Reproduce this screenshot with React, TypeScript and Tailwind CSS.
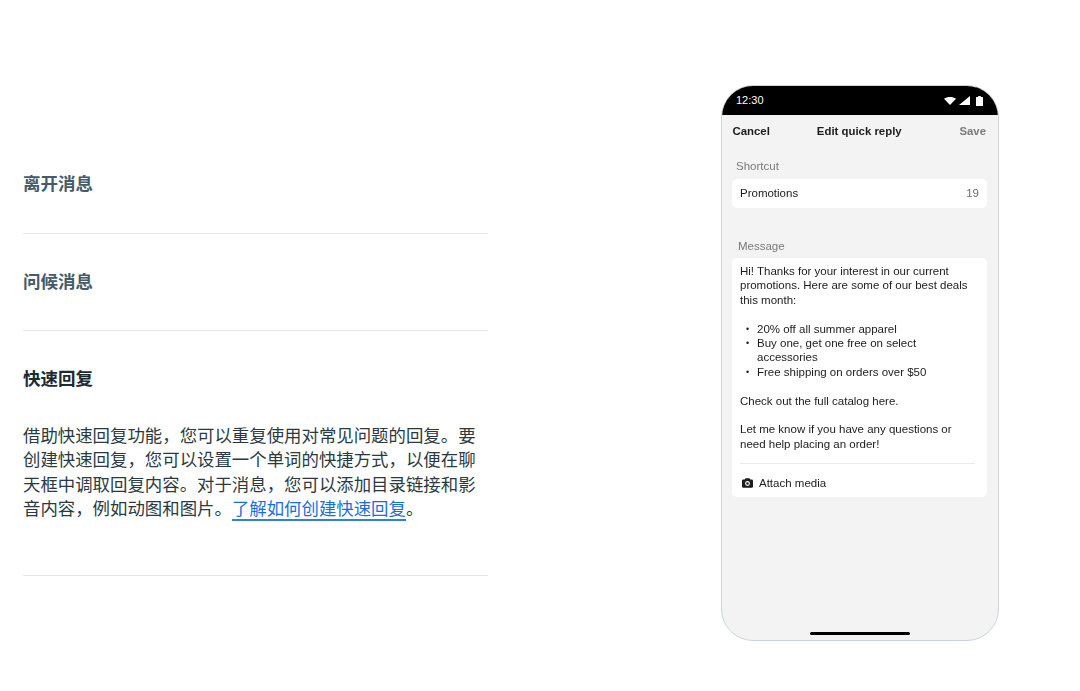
import React from "react";

const cjk = { fontFamily: '"Liberation Sans", "Noto Sans CJK SC", sans-serif' };

function Row({ title }: { title: string }) {
  return (
    <div className="border-b border-[#e4e6eb] h-[97.5px] flex items-center">
      <h3 className="text-[17.5px] leading-[24.5px] font-bold text-[#465a69]">{title}</h3>
    </div>
  );
}

function Bullet({ children }: { children: React.ReactNode }) {
  return (
    <li className="flex">
      <span className="w-[17px] pl-[6px] shrink-0 text-[9px]">•</span>
      <span>{children}</span>
    </li>
  );
}

export default function App() {
  return (
    <div className="w-[1080px] h-[691px] bg-white overflow-hidden flex items-start" style={cjk}>
      <div className="w-[465px] ml-[23px] mt-[136px] shrink-0">
        <Row title="离开消息" />
        <Row title="问候消息" />
        <div className="border-b border-[#e4e6eb] pt-[36px] pb-[53px]">
          <h3 className="text-[17.5px] leading-[24.5px] font-bold text-[#1c2b33]">快速回复</h3>
          <p className="mt-[32px] text-[17.42px] leading-[24.5px] text-[#2b3a42]">
            借助快速回复功能，您可以重复使用对常见问题的回复。要创建快速回复，您可以设置一个单词的快捷方式，以便在聊天框中调取回复内容。对于消息，您可以添加目录链接和影音内容，例如动图和图片。
            <a className="text-[#1a6fe0] border-b-2 border-[#2f7fe6]">了解如何创建快速回复</a>。
          </p>
        </div>
      </div>

      <div
        className="ml-[233px] mt-[85px] w-[278px] h-[556px] shrink-0 rounded-[32px] border-[1.5px] border-[#c8d5df] bg-[#f3f3f3] overflow-hidden flex flex-col text-[#1c1c1c] blur-[0.4px]"
        style={{ fontFamily: '"Liberation Sans", Arial, sans-serif' }}
      >
        <div className="h-[29px] bg-black text-white flex items-center justify-between pl-[14px] pr-[15px] shrink-0">
          <span className="text-[11px]">12:30</span>
          <div className="flex items-center gap-[3px]">
            <svg width="12" height="8" viewBox="0 0 12 8"><path d="M0 1.800C3.300 -.6 8.700 -.6 12 1.800L6 8z" fill="#fff" /></svg>
            <svg width="11" height="9" viewBox="0 0 11 9"><path d="M11 0V9H0z" fill="#fff" /></svg>
            <svg width="7" height="10" viewBox="0 0 7 10" className="ml-[3px]"><path d="M2.200 0h2.600v1H6.500a.5.5 0 0 1 .5.5V9.500a.5.5 0 0 1-.5.5H.5a.5.5 0 0 1-.5-.5V1.500a.5.5 0 0 1 .5-.5H2.200z" fill="#fff" /></svg>
          </div>
        </div>
        <div className="grid grid-cols-[1fr_auto_1fr] items-center pl-[10.5px] pr-[12px] mt-[8px] h-[16px] text-[11.4px] font-bold">
          <span>Cancel</span>
          <span>Edit quick reply</span>
          <span className="text-[#7a7a7a] text-right">Save</span>
        </div>
        <div className="text-[11.5px] leading-[14px] text-[#7a7a7a] mt-[20px] ml-[14px]">Shortcut</div>
        <div className="mx-[10px] w-[255px] mt-[6px] h-[29px] rounded-[5px] bg-white flex items-center justify-between px-[8px] text-[11.5px]">
          <span>Promotions</span>
          <span className="text-[#6b6b6b]">19</span>
        </div>
        <div className="text-[11.5px] leading-[14px] text-[#7a7a7a] mt-[31px] ml-[16px]">Message</div>
        <div className="mx-[10px] w-[255px] mt-[5px] h-[239px] rounded-[5px] bg-white px-[8px] pt-[6px] text-[11.5px] leading-[14.4px]">
          <p>Hi! Thanks for your interest in our current promotions. Here are some of our best deals this month:</p>
          <ul className="mt-[14.4px]">
            <Bullet>20% off all summer apparel</Bullet>
            <Bullet>Buy one, get one free on select accessories</Bullet>
            <Bullet>Free shipping on orders over $50</Bullet>
          </ul>
          <p className="mt-[14.4px]">Check out the full catalog here.</p>
          <p className="mt-[14.4px]">Let me know if you have any questions or need help placing an order!</p>
          <div className="border-t border-[#ececec] mt-[12px] mr-[4px] pt-[12px] flex items-center gap-[6px]">
            <svg width="11" height="10" viewBox="0 0 13 11" className="ml-[2px]">
              <path fillRule="evenodd" fill="#1c1c1c" d="M4.200 0h4.600l1 1.500h1.700A1.500 1.500 0 0 1 13 3v6.500A1.500 1.500 0 0 1 11.500 11h-10A1.500 1.500 0 0 1 0 9.500V3a1.500 1.500 0 0 1 1.500-1.500h1.700zM6.500 3.200a2.900 2.900 0 1 0 0 5.800 2.900 2.900 0 0 0 0-5.800zM6.500 4.600a1.500 1.500 0 1 1 0 3 1.500 1.500 0 0 1 0-3z" />
            </svg>
            <span>Attach media</span>
          </div>
        </div>
        <div className="mt-auto mb-[5px] mx-auto w-[100px] h-[3px] rounded-full bg-black" />
      </div>
    </div>
  );
}
